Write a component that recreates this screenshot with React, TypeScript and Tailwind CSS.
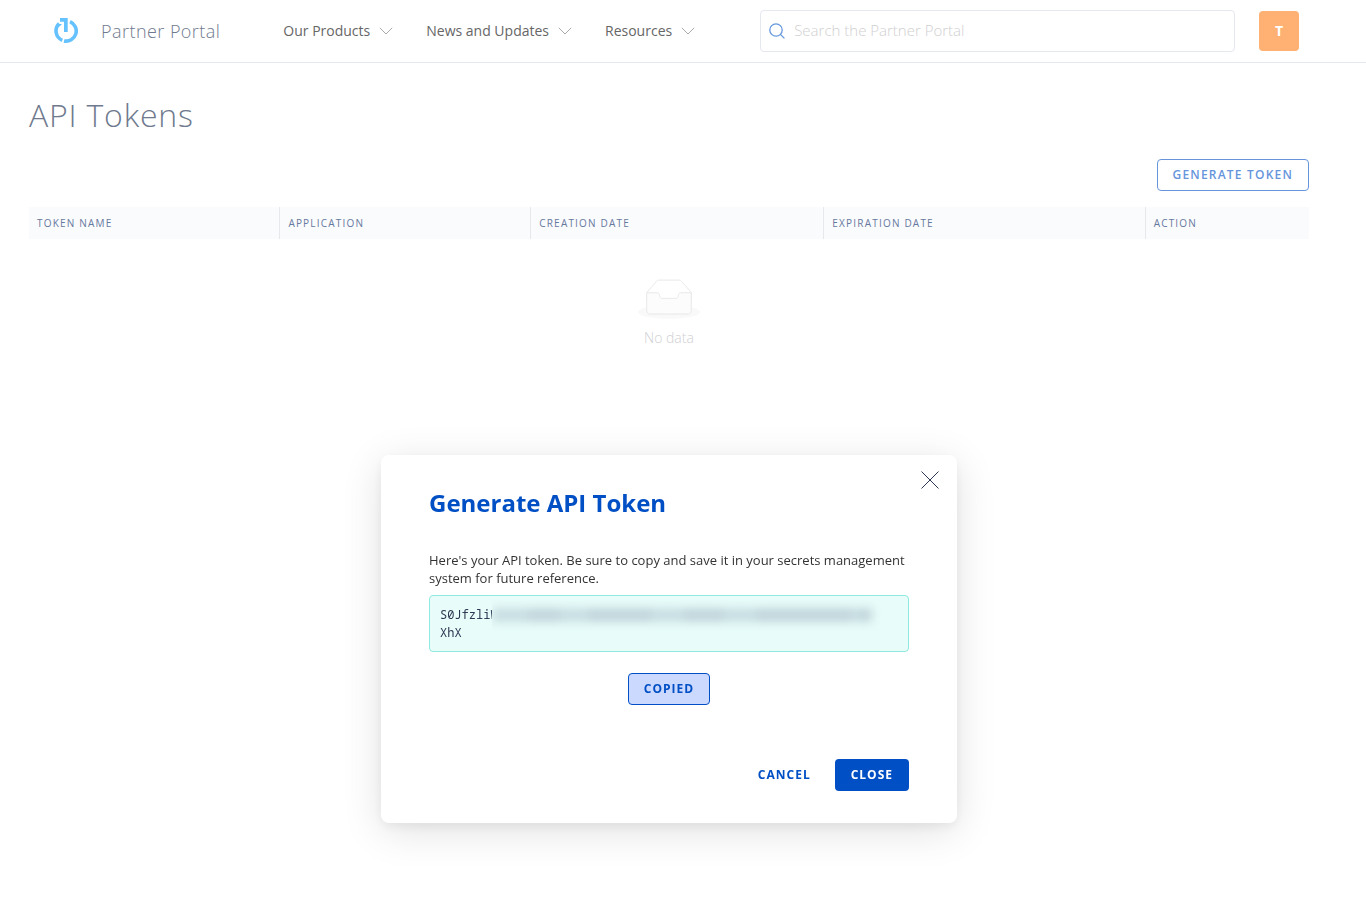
import { useState } from 'react'
import { clsx } from 'clsx'

const navItems = [
  { label: 'Our Products', href: '#products' },
  { label: 'News and Updates', href: '#news' },
  { label: 'Resources', href: '#resources' },
]

const columns = [
  { label: 'Token Name', width: 'w-[19.6%]' },
  { label: 'Application', width: 'w-[19.6%]' },
  { label: 'Creation Date', width: 'w-[22.9%]' },
  { label: 'Expiration Date', width: 'w-[25.1%]' },
  { label: 'Action', width: 'w-[12.8%]' },
]

// Hidden part of the token, one bar per group of characters
const maskedGroups = ['w-9', 'w-8', 'w-7', 'w-16', 'w-8', 'w-10', 'w-8', 'w-24', 'w-2', 'w-3']

function Logo() {
  return (
    <svg className="h-[26px] w-6" viewBox="0 0 24 26" fill="none" aria-hidden="true">
      <path d="M6 0h7.700v14H10V3.700H6z" fill="#66c2ff" />
      <path d="M4.500 6H8L5.500 8.500z" fill="#66c2ff" />
      <path d="M5.200 5.600A10.100 10.100 0 0 0 8.300 22.300" stroke="#66c2ff" strokeWidth="3.600" />
      <path d="M16 3.700A10.100 10.100 0 0 1 10 22.900" stroke="#66c2ff" strokeWidth="3.600" />
    </svg>
  )
}

function Chevron() {
  return (
    <svg className="h-2 w-[14px]" viewBox="0 0 14 8" fill="none" stroke="#aaa" aria-hidden="true">
      <path d="M.8.800 7 7 13.200.8" />
    </svg>
  )
}

function EmptyBox() {
  return (
    <svg className="mx-auto h-10 w-[62px]" viewBox="0 0 64 41" aria-hidden="true">
      <g transform="translate(0 1)" fill="none" fillRule="evenodd">
        <ellipse fill="#f9f9f9" cx="32" cy="33" rx="32" ry="7" />
        <g fillRule="nonzero" stroke="#e8e8e8">
          <path d="M55 12.760L44.854 1.258C44.367.474 43.656 0 42.907 0H21.093c-.749 0-1.460.474-1.947 1.257L9 12.761V22h46v-9.240z" fill="#fff" />
          <path
            d="M41.613 15.931c0-1.605.994-2.930 2.227-2.931H55v18.137C55 33.260 53.680 35 52.050 35h-40.100C10.320 35 9 33.259 9 31.137V13h11.160c1.233 0 2.227 1.323 2.227 2.928v.022c0 1.605 1.005 2.901 2.237 2.901h14.752c1.232 0 2.237-1.308 2.237-2.913v-.007z"
            fill="#fcfcfc"
          />
        </g>
      </g>
    </svg>
  )
}

function Header() {
  return (
    <header className="flex h-[63px] items-center border-b border-[#e6e8f0] pr-[67px] pb-px pl-[54px]">
      <a href="#home" className="flex shrink-0 items-center gap-[23px]">
        <Logo />
        <span className="text-lg font-light tracking-wide text-[#6f7a8e]">Partner Portal</span>
      </a>
      <nav className="ml-[63px] flex shrink-0 items-center gap-[33px]">
        {navItems.map((item) => (
          <a key={item.label} href={item.href} className="flex items-center gap-[9px] text-sm font-medium text-[#666]">
            {item.label}
            <Chevron />
          </a>
        ))}
      </nav>
      <label className="ml-[65px] flex h-[42px] min-w-0 flex-1 items-center gap-[9px] rounded border border-[#e6e8f0] px-2">
        <svg className="size-4 shrink-0" viewBox="0 0 16 16" fill="none" stroke="#6698dd" strokeWidth="1.300" aria-hidden="true">
          <circle cx="7" cy="7" r="6.200" />
          <path d="m11.400 11.400 4 4" />
        </svg>
        <input
          type="search"
          aria-label="Search the Partner Portal"
          placeholder="Search the Partner Portal"
          className="w-full min-w-0 bg-transparent text-[15px] font-light outline-none placeholder:text-[#d0d0d0]"
        />
      </label>
      <button type="button" className="ml-6 size-10 shrink-0 rounded bg-[#ffb173] text-sm font-bold text-white">
        T
      </button>
    </header>
  )
}

function TokensTable() {
  return (
    <table className="mt-4 w-full table-fixed border-collapse">
      <thead>
        <tr className="h-8 bg-[#fafbfd]">
          {columns.map((column, i) => (
            <th
              key={column.label}
              scope="col"
              className={clsx(
                'px-2 text-left text-[10px] font-normal tracking-[0.12em] text-[#66799e] uppercase',
                column.width,
                i < columns.length - 1 && 'border-r border-[#e6e8ec]',
              )}
            >
              {column.label}
            </th>
          ))}
        </tr>
      </thead>
      <tbody>
        <tr>
          <td colSpan={columns.length} className="pt-10 text-center">
            <EmptyBox />
            <p className="mt-[9px] text-sm font-light text-[#d0d0d3]">No data</p>
          </td>
        </tr>
      </tbody>
    </table>
  )
}

function TokenDialog({ onClose }: { onClose: () => void }) {
  return (
    <div className="fixed inset-x-0 top-1/2 flex justify-center pr-7">
      <div
        role="dialog"
        aria-labelledby="dialog-title"
        className="relative w-full max-w-[576px] rounded-lg bg-white px-12 py-8 shadow-[0_8px_40px_rgba(0,0,0,0.12),0_4px_12px_rgba(0,0,0,0.06)]"
      >
        <button type="button" aria-label="Close dialog" onClick={onClose} className="absolute top-4 right-[18px]">
          <svg className="size-[18px]" viewBox="0 0 18 18" stroke="#2d3752" aria-hidden="true">
            <path d="m.5.500 17 17m0-17-17 17" />
          </svg>
        </button>
        <h2 id="dialog-title" className="text-2xl leading-8 font-bold text-[#004fc4]">
          Generate API Token
        </h2>
        <p className="mt-8 text-[13px] leading-[18px] text-[#333]">
          Here's your API token. Be sure to copy and save it in your secrets management system for future reference.
        </p>
        <div className="mt-2 rounded border border-[#8fe9df] bg-[#e8fdfa] px-[10px] pt-[10px] pb-[9px] font-['Noto_Sans_Mono','DejaVu_Sans_Mono',monospace] text-xs leading-[18px] text-[#2d3752]">
          <div className="flex items-center">
            <span>S0JfzliW</span>
            <span className="-ml-[6px] flex h-[18px] min-w-0 items-center overflow-x-clip bg-[#e8fdfa] pr-4" aria-hidden="true">
              <span className="flex blur-[5px]">
                {maskedGroups.map((width, i) => (
                  <span key={i} className={clsx('h-[14px]', width, i % 2 ? 'bg-[#c1d5db]' : 'bg-[#c8dde1]')} />
                ))}
              </span>
            </span>
          </div>
          XhX
        </div>
        <div className="mt-[21px] flex justify-center">
          <button
            type="button"
            className="h-8 rounded border border-[#004fc4] bg-[#ccd9ff] px-[15px] text-xs font-bold tracking-[1px] text-[#004fc4]"
          >
            COPIED
          </button>
        </div>
        <div className="mt-[54px] flex justify-end gap-2">
          <button type="button" onClick={onClose} className="h-8 px-4 text-xs font-bold tracking-[1px] text-[#004fc4]">
            CANCEL
          </button>
          <button type="button" onClick={onClose} className="h-8 rounded bg-[#004fc4] px-4 text-xs font-bold tracking-[1px] text-white">
            CLOSE
          </button>
        </div>
      </div>
    </div>
  )
}

export default function App() {
  const [isOpen, setIsOpen] = useState(true)

  return (
    <div className="min-h-screen bg-white font-['Open_Sans',sans-serif]">
      <Header />
      <main className="pt-8 pr-[57px] pl-[29px]">
        <h1 className="text-[32px] leading-10 font-light tracking-wide text-[#6f7a8e]">API Tokens</h1>
        <div className="mt-6 flex justify-end">
          <button
            type="button"
            onClick={() => setIsOpen(true)}
            className="h-8 rounded border border-[#6695dc] px-[15px] text-xs font-semibold tracking-widest text-[#6695dc]"
          >
            GENERATE TOKEN
          </button>
        </div>
        <TokensTable />
      </main>
      {isOpen && <TokenDialog onClose={() => setIsOpen(false)} />}
    </div>
  )
}
